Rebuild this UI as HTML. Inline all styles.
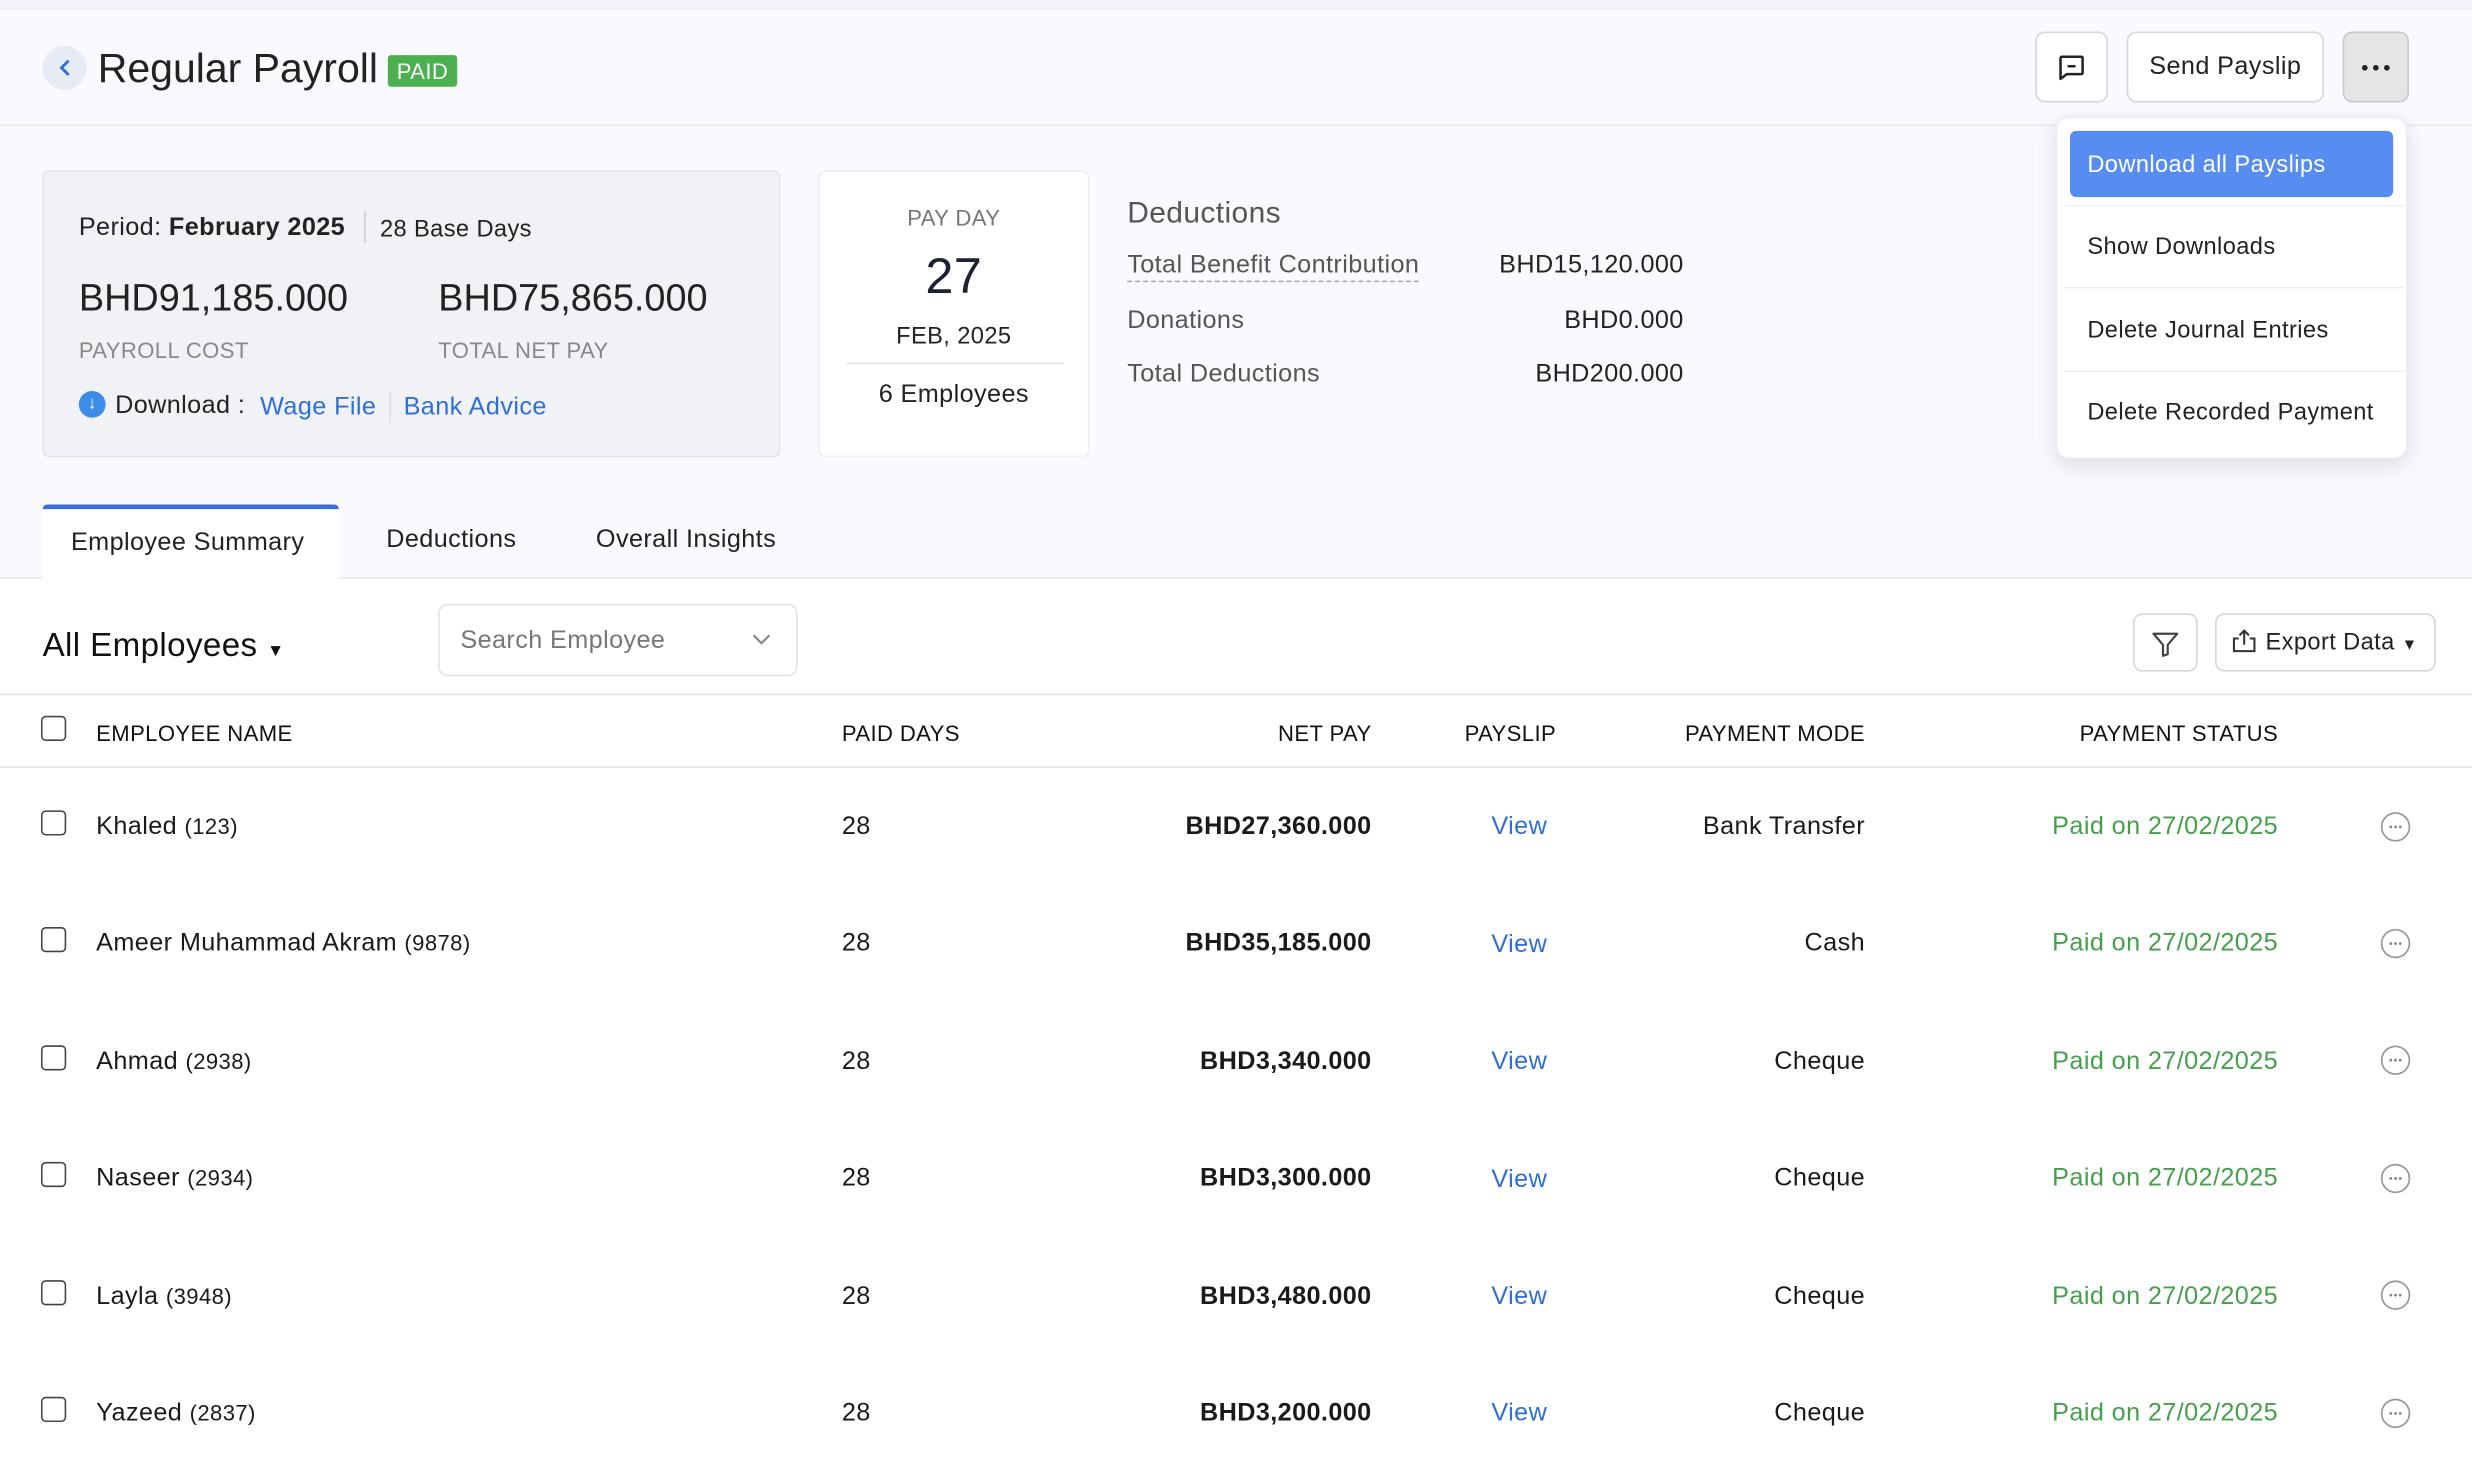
<!DOCTYPE html>
<html><head><meta charset="utf-8"><style>
*{box-sizing:border-box;margin:0;padding:0}
html,body{width:2472px;height:1464px;overflow:hidden;background:#fff}
#w{position:absolute;left:0;top:0;width:1568px;height:929px;transform:scale(1.576531);transform-origin:0 0;font-family:"Liberation Sans",sans-serif;color:#222;background:#fff;letter-spacing:0.25px}
.a{position:absolute;white-space:nowrap}
.t{margin-top:1px}
.btn{position:absolute;border:1px solid #d6d6d8;border-radius:6px;background:#fff}
.hd{font-size:14px;color:#111;top:457px}
.r{font-size:16px;color:#1a1a1a;margin-top:1px}
.cb{position:absolute;left:26px;width:16px;height:16px;border:1.3px solid #444;border-radius:3px;background:#fff}
.g{color:#44a04a}
.bl{color:#2f6fd6}
.dot{position:absolute;left:1510px;width:19px;height:19px}
.it{position:absolute;left:1324px;font-size:15px;color:#222;margin-top:1px}
.sep{position:absolute;left:1309px;width:216px;height:1px;background:#eef0f3}
</style></head><body><div id="w">
<div class="a" style="left:0;top:0;width:1568px;height:366px;background:#fafafe"></div>
<div class="a" style="left:0;top:0;width:1568px;height:6px;background:#f4f5f9;border-bottom:1px solid #ebecef"></div>
<div class="a" style="left:0;top:79px;width:1568px;height:1px;background:#e8e9ee"></div>
<div class="a" style="left:27px;top:29px;width:28px;height:28px;border-radius:50%;background:#e6ebf6"></div>
<svg class="a" style="left:34px;top:36px" width="14" height="14" viewBox="0 0 14 14"><path d="M9 3 L5 7 L9 11" stroke="#2f6fd6" stroke-width="1.8" fill="none" stroke-linecap="round"/></svg>
<div class="a t" style="left:62px;top:27px;font-size:26px;color:#222;letter-spacing:0">Regular Payroll</div>
<div class="a" style="left:246px;top:35px;width:44px;height:20px;background:#4caf50;border-radius:2px;color:#fff;font-size:14px;text-align:center;line-height:20px">PAID</div>
<div class="btn" style="left:1291px;top:20px;width:46px;height:45px"></div>
<svg class="a" style="left:1304px;top:33px" width="20" height="20" viewBox="0 0 20 20"><path d="M3 4 Q3 3 4 3 H16 Q17 3 17 4 V13 Q17 14 16 14 H7 L3 17 Z" stroke="#222" stroke-width="1.6" fill="none" stroke-linejoin="round"/><path d="M7.5 9 H12.5" stroke="#222" stroke-width="1.6"/></svg>
<div class="btn" style="left:1349px;top:20px;width:125px;height:45px;font-size:16px;text-align:center;line-height:44px;color:#222">Send Payslip</div>
<div class="btn" style="left:1486px;top:20px;width:42px;height:45px;background:#e5e5e5;border-color:#c8c8c8"></div>
<svg class="a" style="left:1497px;top:38px" width="20" height="10" viewBox="0 0 20 10"><circle cx="3" cy="5" r="1.8" fill="#222"/><circle cx="10" cy="5" r="1.8" fill="#222"/><circle cx="17" cy="5" r="1.8" fill="#222"/></svg>
<div class="a" style="left:1304px;top:74px;width:223px;height:217px;background:#fff;border-radius:8px;box-shadow:0 4px 14px rgba(0,0,0,.12);border:1px solid #eee"></div>
<div class="a" style="left:1313px;top:83px;width:205px;height:42px;background:#578cf0;border-radius:4px;color:#fff;font-size:15px;line-height:43px;padding-left:11px">Download all Payslips</div>
<div class="sep" style="top:130px"></div>
<div class="it" style="top:147px">Show Downloads</div>
<div class="sep" style="top:182px"></div>
<div class="it" style="top:200px">Delete Journal Entries</div>
<div class="sep" style="top:235px"></div>
<div class="it" style="top:252px">Delete Recorded Payment</div>

<div class="a" style="left:27px;top:108px;width:468px;height:182px;background:#f1f2f6;border:1px solid #e3e5eb;border-radius:4px"></div>
<div class="a t" style="left:50px;top:135px;font-size:16px">Period: <b style="font-weight:600">February 2025</b></div>
<div class="a" style="left:231px;top:134px;width:1px;height:20px;background:#ccc"></div>
<div class="a t" style="left:241px;top:136px;font-size:15px">28 Base Days</div>
<div class="a t" style="left:50px;top:175px;font-size:24px;color:#222;letter-spacing:0">BHD91,185.000</div>
<div class="a t" style="left:278px;top:175px;font-size:24px;color:#222;letter-spacing:0">BHD75,865.000</div>
<div class="a t" style="left:50px;top:213px;font-size:14px;color:#888">PAYROLL COST</div>
<div class="a t" style="left:278px;top:213px;font-size:14px;color:#888">TOTAL NET PAY</div>
<div class="a" style="left:50px;top:248px;width:17px;height:17px;border-radius:50%;background:#3d8de8;color:#fff;font-size:11px;text-align:center;line-height:17px">&darr;</div>
<div class="a t" style="left:73px;top:248px;font-size:16px">Download :</div>
<div class="a t bl" style="left:165px;top:249px;font-size:16px">Wage File</div>
<div class="a" style="left:247px;top:248px;width:1px;height:20px;background:#ddd"></div>
<div class="a t bl" style="left:256px;top:249px;font-size:16px">Bank Advice</div>

<div class="a" style="left:519px;top:108px;width:172px;height:182px;background:#fff;border:1px solid #eceef2;border-radius:5px"></div>
<div class="a t" style="left:519px;top:129px;width:172px;text-align:center;font-size:14px;color:#777">PAY DAY</div>
<div class="a t" style="left:519px;top:156px;width:172px;text-align:center;font-size:32px;color:#1c2233">27</div>
<div class="a t" style="left:519px;top:204px;width:172px;text-align:center;font-size:15px;color:#222">FEB, 2025</div>
<div class="a" style="left:537px;top:230px;width:138px;height:1px;background:#e5e6ea"></div>
<div class="a t" style="left:519px;top:241px;width:172px;text-align:center;font-size:16px;color:#222">6 Employees</div>

<div class="a t" style="left:715px;top:124px;font-size:19px;color:#555">Deductions</div>
<div class="a t" style="left:715px;top:159px;font-size:16px;color:#555;border-bottom:1px dashed #aaa">Total Benefit Contribution</div>
<div class="a t" style="left:715px;top:194px;font-size:16px;color:#555">Donations</div>
<div class="a t" style="left:715px;top:228px;font-size:16px;color:#555">Total Deductions</div>
<div class="a t" style="left:868px;width:200px;text-align:right;top:159px;font-size:16px">BHD15,120.000</div>
<div class="a t" style="left:868px;width:200px;text-align:right;top:194px;font-size:16px">BHD0.000</div>
<div class="a t" style="left:868px;width:200px;text-align:right;top:228px;font-size:16px">BHD200.000</div>

<div class="a" style="left:0;top:366px;width:1568px;height:1px;background:#e6e7eb"></div>
<div class="a" style="left:27px;top:320px;width:188px;height:47px;background:#fff;border-top:3px solid #3a6fd8;border-radius:3px 3px 0 0"></div>
<div class="a t" style="left:45px;top:335px;font-size:16px;color:#222">Employee Summary</div>
<div class="a t" style="left:245px;top:333px;font-size:16px;color:#222">Deductions</div>
<div class="a t" style="left:378px;top:333px;font-size:16px;color:#222">Overall Insights</div>

<div class="a t" style="left:27px;top:397px;font-size:21px;color:#111">All Employees <span style="font-size:11px">&#9660;</span></div>
<div class="btn" style="left:278px;top:383px;width:228px;height:46px;border-color:#e0e1e5"></div>
<div class="a t" style="left:292px;top:397px;font-size:16px;color:#777">Search Employee</div>
<svg class="a" style="left:477px;top:401px" width="12" height="10" viewBox="0 0 12 10"><path d="M1 2 L6 7 L11 2" stroke="#888" stroke-width="1.4" fill="none"/></svg>
<div class="btn" style="left:1353px;top:389px;width:41px;height:37px"></div>
<svg class="a" style="left:1364px;top:399px" width="19" height="19" viewBox="0 0 19 19"><path d="M2 3 H17 L11 10 V16 L8 17 V10 Z" stroke="#444" stroke-width="1.4" fill="none" stroke-linejoin="round"/></svg>
<div class="btn" style="left:1405px;top:389px;width:140px;height:37px"></div>
<svg class="a" style="left:1415px;top:398px" width="17" height="17" viewBox="0 0 17 17"><path d="M5 7 H2 V15 H15 V7 H12 M8.5 11 V2 M5.5 5 L8.5 2 L11.5 5" stroke="#333" stroke-width="1.3" fill="none"/></svg>
<div class="a t" style="left:1437px;top:398px;font-size:15px;color:#222">Export Data <span style="font-size:10px">&#9660;</span></div>

<div class="a" style="left:0;top:440px;width:1568px;height:1px;background:#e0e0e3"></div>
<div class="a" style="left:0;top:486px;width:1568px;height:1px;background:#e0e0e3"></div>
<div class="cb" style="top:454px"></div>
<div class="a hd" style="left:61px">EMPLOYEE NAME</div>
<div class="a hd" style="left:534px">PAID DAYS</div>
<div class="a hd" style="left:670px;width:200px;text-align:right">NET PAY</div>
<div class="a hd" style="left:929px">PAYSLIP</div>
<div class="a hd" style="left:983px;width:200px;text-align:right">PAYMENT MODE</div>
<div class="a hd" style="left:1245px;width:200px;text-align:right">PAYMENT STATUS</div>

<div class="cb" style="top:514px"></div><div class="a r" style="left:61px;top:515px">Khaled <span style="font-size:14px">(123)</span></div><div class="a r" style="left:534px;top:515px">28</div><div class="a r" style="left:670px;width:200px;text-align:right;top:515px;font-weight:600">BHD27,360.000</div><div class="a r bl" style="left:946px;top:515px">View</div><div class="a r" style="left:983px;width:200px;text-align:right;top:515px">Bank Transfer</div><div class="a r g" style="left:1245px;width:200px;text-align:right;top:515px">Paid on 27/02/2025</div><svg class="dot" style="top:515px" viewBox="0 0 19 19"><circle cx="9.5" cy="9.5" r="8.8" fill="none" stroke="#999" stroke-width="1.1"/><circle cx="6.5" cy="9.5" r="0.9" fill="#888"/><circle cx="9.5" cy="9.5" r="0.9" fill="#888"/><circle cx="12.5" cy="9.5" r="0.9" fill="#888"/></svg>
<div class="cb" style="top:588px"></div><div class="a r" style="left:61px;top:589px">Ameer Muhammad Akram <span style="font-size:14px">(9878)</span></div><div class="a r" style="left:534px;top:589px">28</div><div class="a r" style="left:670px;width:200px;text-align:right;top:589px;font-weight:600">BHD35,185.000</div><div class="a r bl" style="left:946px;top:590px">View</div><div class="a r" style="left:983px;width:200px;text-align:right;top:589px">Cash</div><div class="a r g" style="left:1245px;width:200px;text-align:right;top:589px">Paid on 27/02/2025</div><svg class="dot" style="top:589px" viewBox="0 0 19 19"><circle cx="9.5" cy="9.5" r="8.8" fill="none" stroke="#999" stroke-width="1.1"/><circle cx="6.5" cy="9.5" r="0.9" fill="#888"/><circle cx="9.5" cy="9.5" r="0.9" fill="#888"/><circle cx="12.5" cy="9.5" r="0.9" fill="#888"/></svg>
<div class="cb" style="top:663px"></div><div class="a r" style="left:61px;top:664px">Ahmad <span style="font-size:14px">(2938)</span></div><div class="a r" style="left:534px;top:664px">28</div><div class="a r" style="left:670px;width:200px;text-align:right;top:664px;font-weight:600">BHD3,340.000</div><div class="a r bl" style="left:946px;top:664px">View</div><div class="a r" style="left:983px;width:200px;text-align:right;top:664px">Cheque</div><div class="a r g" style="left:1245px;width:200px;text-align:right;top:664px">Paid on 27/02/2025</div><svg class="dot" style="top:663px" viewBox="0 0 19 19"><circle cx="9.5" cy="9.5" r="8.8" fill="none" stroke="#999" stroke-width="1.1"/><circle cx="6.5" cy="9.5" r="0.9" fill="#888"/><circle cx="9.5" cy="9.5" r="0.9" fill="#888"/><circle cx="12.5" cy="9.5" r="0.9" fill="#888"/></svg>
<div class="cb" style="top:737px"></div><div class="a r" style="left:61px;top:738px">Naseer <span style="font-size:14px">(2934)</span></div><div class="a r" style="left:534px;top:738px">28</div><div class="a r" style="left:670px;width:200px;text-align:right;top:738px;font-weight:600">BHD3,300.000</div><div class="a r bl" style="left:946px;top:739px">View</div><div class="a r" style="left:983px;width:200px;text-align:right;top:738px">Cheque</div><div class="a r g" style="left:1245px;width:200px;text-align:right;top:738px">Paid on 27/02/2025</div><svg class="dot" style="top:738px" viewBox="0 0 19 19"><circle cx="9.5" cy="9.5" r="8.8" fill="none" stroke="#999" stroke-width="1.1"/><circle cx="6.5" cy="9.5" r="0.9" fill="#888"/><circle cx="9.5" cy="9.5" r="0.9" fill="#888"/><circle cx="12.5" cy="9.5" r="0.9" fill="#888"/></svg>
<div class="cb" style="top:812px"></div><div class="a r" style="left:61px;top:813px">Layla <span style="font-size:14px">(3948)</span></div><div class="a r" style="left:534px;top:813px">28</div><div class="a r" style="left:670px;width:200px;text-align:right;top:813px;font-weight:600">BHD3,480.000</div><div class="a r bl" style="left:946px;top:813px">View</div><div class="a r" style="left:983px;width:200px;text-align:right;top:813px">Cheque</div><div class="a r g" style="left:1245px;width:200px;text-align:right;top:813px">Paid on 27/02/2025</div><svg class="dot" style="top:812px" viewBox="0 0 19 19"><circle cx="9.5" cy="9.5" r="8.8" fill="none" stroke="#999" stroke-width="1.1"/><circle cx="6.5" cy="9.5" r="0.9" fill="#888"/><circle cx="9.5" cy="9.5" r="0.9" fill="#888"/><circle cx="12.5" cy="9.5" r="0.9" fill="#888"/></svg>
<div class="cb" style="top:886px"></div><div class="a r" style="left:61px;top:887px">Yazeed <span style="font-size:14px">(2837)</span></div><div class="a r" style="left:534px;top:887px">28</div><div class="a r" style="left:670px;width:200px;text-align:right;top:887px;font-weight:600">BHD3,200.000</div><div class="a r bl" style="left:946px;top:887px">View</div><div class="a r" style="left:983px;width:200px;text-align:right;top:887px">Cheque</div><div class="a r g" style="left:1245px;width:200px;text-align:right;top:887px">Paid on 27/02/2025</div><svg class="dot" style="top:887px" viewBox="0 0 19 19"><circle cx="9.5" cy="9.5" r="8.8" fill="none" stroke="#999" stroke-width="1.1"/><circle cx="6.5" cy="9.5" r="0.9" fill="#888"/><circle cx="9.5" cy="9.5" r="0.9" fill="#888"/><circle cx="12.5" cy="9.5" r="0.9" fill="#888"/></svg>
</div></body></html>
